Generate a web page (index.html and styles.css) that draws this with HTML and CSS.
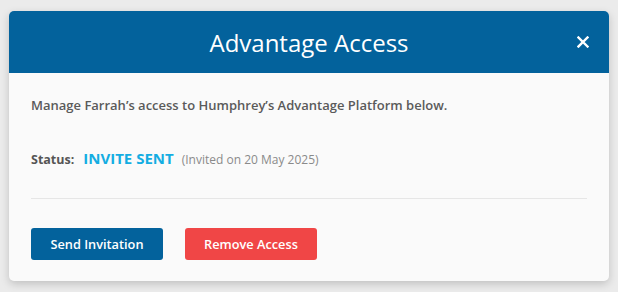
FILE: index.html
```html
<!DOCTYPE html>
<html>
<head>
<meta charset="utf-8">
<link rel="stylesheet" href="styles.css">
</head>
<body>
<div class="modal">
  <div class="modal-header">
    <h1 class="title">Advantage Access</h1>
    <span class="close">
      <svg width="12" height="12" viewBox="0 0 12 12"><path d="M1.5 1.5 L10.5 10.5 M10.5 1.5 L1.5 10.5" stroke="#fff" stroke-width="2.4" stroke-linecap="square"/></svg>
    </span>
  </div>
  <div class="modal-body">
    <p class="intro">Manage Farrah’s access to Humphrey’s Advantage Platform below.</p>
    <p class="status"><span class="label">Status:</span><span class="state">INVITE SENT</span><span class="date">(Invited on 20 May 2025)</span></p>
    <hr class="divider">
    <div class="actions">
      <button class="btn btn-blue">Send Invitation</button>
      <button class="btn btn-red">Remove Access</button>
    </div>
  </div>
</div>
</body>
</html>
```

FILE: styles.css
```css
html, body {
  margin: 0;
  padding: 0;
}
body {
  background: #ebebeb;
  font-family: "Open Sans", "Noto Sans", sans-serif;
  padding: 11px 9px;
}
.modal {
  width: 600px;
  background: #fafafa;
  border-radius: 5px;
  box-shadow: 0 3px 8px rgba(0,0,0,0.18);
  overflow: hidden;
}
.modal-header {
  height: 62px;
  background: #03629c;
  display: flex;
  align-items: center;
  justify-content: center;
  position: relative;
}
.title {
  margin: 0;
  color: #fff;
  font-weight: 400;
  font-size: 24px;
  letter-spacing: 0;
}
.close {
  position: absolute;
  right: 20px;
  top: 25px;
  display: flex;
}
.modal-body {
  padding: 23px 22px 21px 22px;
}
.intro {
  margin: 0;
  font-size: 13px;
  font-weight: 600;
  line-height: 18px;
  color: #5a5a5a;
}
.status {
  margin: 35px 0 0;
  font-size: 12.5px;
  line-height: 18px;
  color: #555;
  display: flex;
  align-items: baseline;
}
.label {
  font-weight: 700;
  color: #555;
}
.state {
  margin-left: 9px;
  font-weight: 700;
  font-size: 15px;
  color: #14ade2;
}
.date {
  margin-left: 8px;
  font-size: 12px;
  color: #8a8a8a;
}
.divider {
  margin: 29px 0 0;
  border: 0;
  border-top: 1px solid #e6e6e6;
}
.actions {
  margin-top: 29px;
  display: flex;
  gap: 22px;
}
.btn {
  width: 132px;
  height: 32px;
  border: 0;
  border-radius: 3px;
  color: #fff;
  font-family: "Open Sans", "Noto Sans", sans-serif;
  font-size: 12.75px;
  font-weight: 600;
  cursor: pointer;
}
.btn-blue { background: #03629c; }
.btn-red { background: #f04646; }
```
